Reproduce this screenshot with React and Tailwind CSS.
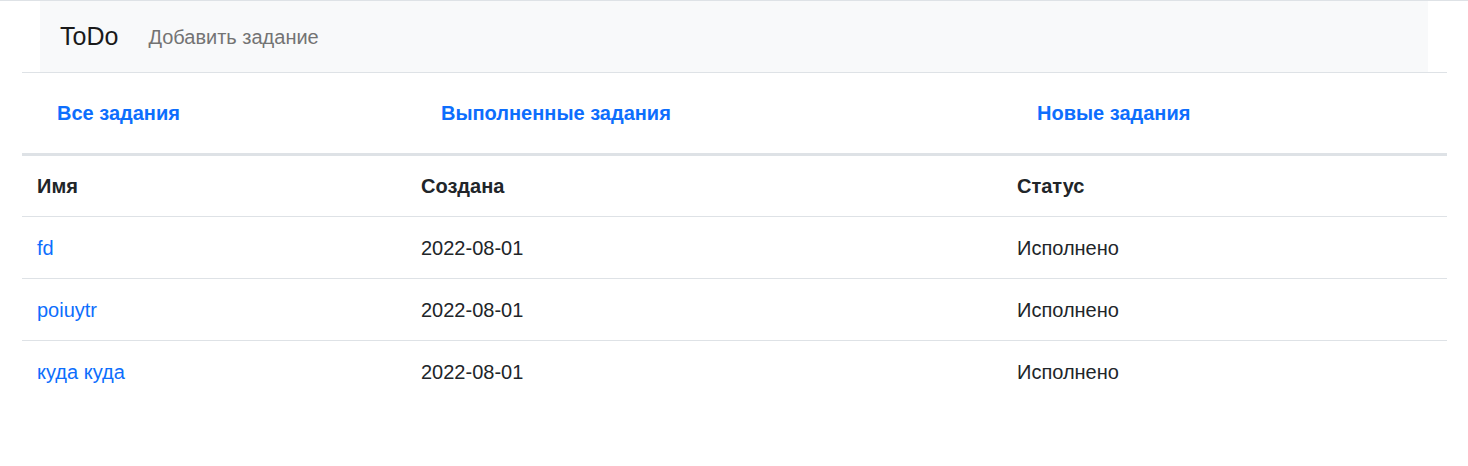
const tasks = [
  { name: "fd", created: "2022-08-01", status: "Исполнено" },
  { name: "poiuytr", created: "2022-08-01", status: "Исполнено" },
  { name: "куда куда", created: "2022-08-01", status: "Исполнено" },
];

const cols = "grid grid-cols-[384px_596px_445px]";

export default function App() {
  return (
    <div
      className="min-h-[466px] bg-white text-[20px] text-[#212529]"
      style={{ fontFamily: '"Liberation Sans", Arial, sans-serif' }}
    >
      <div className="h-px bg-[#dee2e6]" />

      <nav className="mx-[40px] flex h-[71px] items-center bg-[#f8f9fa] px-[20px]">
        <a className="mr-[20px] text-[25px] leading-[37px] text-[#1a1a1a]">ToDo</a>
        <a className="px-[10px] leading-[30px] text-[#737373]">Добавить задание</a>
      </nav>

      <div className="ml-[22px] w-[1425px]">
        <div className={`${cols} h-[81px] items-center border-t border-[#dee2e6]`}>
          {["Все задания", "Выполненные задания", "Новые задания"].map((t) => (
            <div key={t} className="px-[15px]">
              <a className="px-[20px] font-bold text-[#0d6efd]">{t}</a>
            </div>
          ))}
        </div>

        <div className={`${cols} h-[64px] items-center border-t-[3px] border-b border-[#dee2e6] font-bold`}>
          <div className="px-[15px]">Имя</div>
          <div className="px-[15px]">Создана</div>
          <div className="px-[15px]">Статус</div>
        </div>

        {tasks.map((t, i) => (
          <div
            key={t.name}
            className={`${cols} h-[62px] items-center ${
              i < tasks.length - 1 ? "border-b border-[#dee2e6]" : ""
            }`}
          >
            <div className="px-[15px]">
              <a className="text-[#0d6efd]">{t.name}</a>
            </div>
            <div className="px-[15px]">{t.created}</div>
            <div className="px-[15px]">{t.status}</div>
          </div>
        ))}
      </div>
    </div>
  );
}
